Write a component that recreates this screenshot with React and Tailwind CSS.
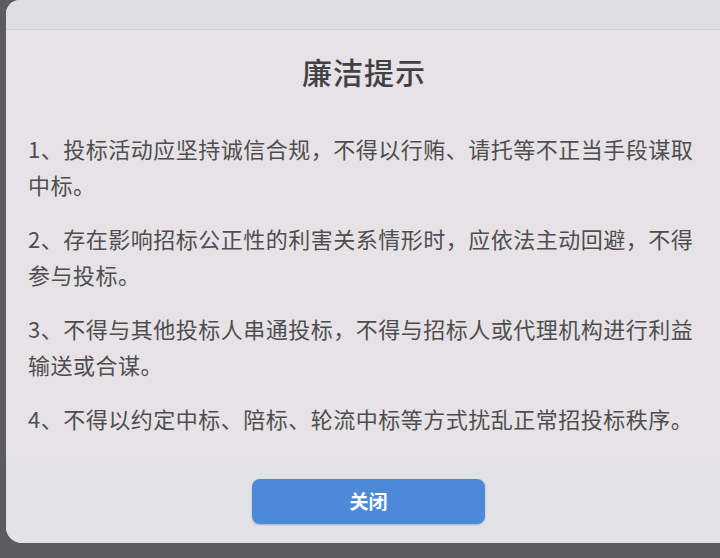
import React from 'react'

const rules = [
  '1、投标活动应坚持诚信合规，不得以行贿、请托等不正当手段谋取中标。',
  '2、存在影响招标公正性的利害关系情形时，应依法主动回避，不得参与投标。',
  '3、不得与其他投标人串通投标，不得与招标人或代理机构进行利益输送或合谋。',
  '4、不得以约定中标、陪标、轮流中标等方式扰乱正常招投标秩序。',
]

const IntegrityNotice = ({ onClose }) => {
  return (
    <div className="w-[716px] ml-[6px] rounded-tl-[14px] rounded-bl-[16px] overflow-hidden bg-[#e7e2e5] flex flex-col">
      {/* strip above the title */}
      <div className="h-[30px] bg-[#dedde2] border-b border-[#d2d1d6]" />

      <h2 className="pt-[21px] text-center text-[30px] leading-[40px] font-medium text-[#414144] tracking-[1px]">
        廉洁提示
      </h2>

      <div className="pt-[39px] pb-[24px] pl-[22px] pr-[20px] flex flex-col gap-[18px]">
        {rules.map((text) => (
          <p key={text} className="text-[22px] leading-[36px] tracking-[0.5px] text-[#4e4e51]">
            {text}
          </p>
        ))}
      </div>

      <div className="bg-[#e3e2e7] pt-[19px] pb-[19px] pl-[9px] flex justify-center">
        <button
          onClick={onClose}
          className="w-[233px] h-[45px] rounded-[8px] bg-[#4c8ad8] text-white text-[19px] font-bold shadow-[0_1px_2px_rgba(40,80,140,0.35)]"
        >
          关闭
        </button>
      </div>
    </div>
  )
}

export default function App() {
  return (
    <div
      className="w-[720px] h-[558px] overflow-hidden bg-[#5c5c5f] pb-[13px]"
      style={{ fontFamily: '"Noto Sans CJK SC", "Noto Sans", sans-serif' }}
    >
      <IntegrityNotice onClose={() => {}} />
    </div>
  )
}
